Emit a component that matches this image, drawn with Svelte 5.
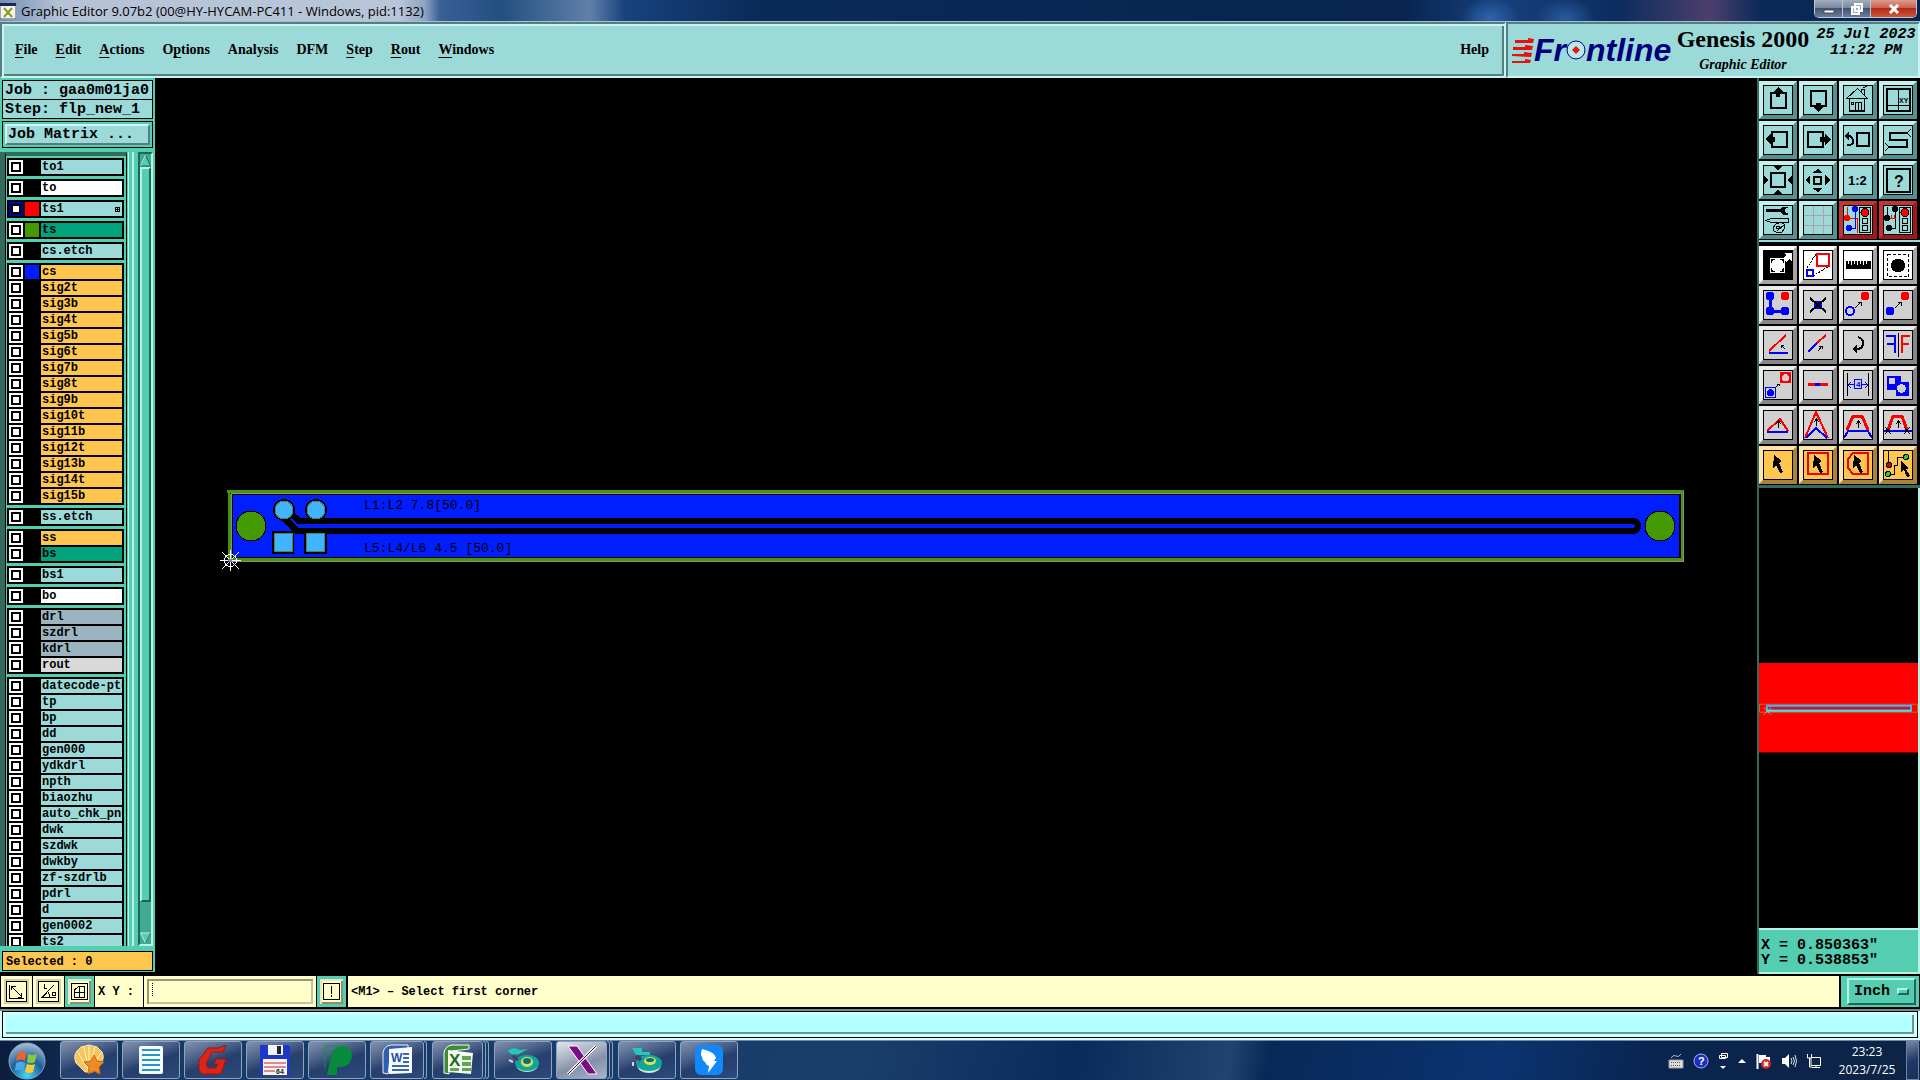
<script lang="ts">
  interface Layer {
    name: string;
    tone?: string;
    swatch?: string;
    active?: boolean;
  }

  interface Tool {
    label: string;
    icon: string;
    tone?: string;
  }

  // [text before the mnemonic, mnemonic, text after it]
  const menus = [
    ['', 'F', 'ile'],
    ['', 'E', 'dit'],
    ['', 'A', 'ctions'],
    ['O', 'p', 'tions'],
    ['Analysis', '', ''],
    ['DFM', '', ''],
    ['', 'S', 'tep'],
    ['', 'R', 'out'],
    ['', 'W', 'indows']
  ];

  const plain = (names: string, tone = ''): Layer[] => names.split(' ').map((name) => ({ name, tone }));

  const groups: Layer[][] = [
    [{ name: 'to1' }],
    [{ name: 'to', tone: 'silk' }],
    [{ name: 'ts1', swatch: '#ff0000', active: true }],
    [{ name: 'ts', tone: 'mask', swatch: '#449900' }],
    [{ name: 'cs.etch' }],
    [
      { name: 'cs', tone: 'signal', swatch: '#001eff' },
      ...plain('sig2t sig3b sig4t sig5b sig6t sig7b sig8t sig9b sig10t sig11b sig12t sig13b sig14t sig15b', 'signal')
    ],
    [{ name: 'ss.etch' }],
    [{ name: 'ss', tone: 'signal' }, { name: 'bs', tone: 'mask' }],
    [{ name: 'bs1' }],
    [{ name: 'bo', tone: 'silk' }],
    [...plain('drl szdrl kdrl', 'drill'), { name: 'rout', tone: 'rout' }],
    plain('datecode-ptd tp bp dd gen000 ydkdrl npth biaozhu auto_chk_pnl dwk szdwk dwkby zf-szdrlb pdrl d gen0002 ts2')
  ];

  const cursor = '<path d="M11 5l8 6-3 2 4 9-3 1-4-8-3 3z" fill="#000"/>';
  const smallArrow = '<path d="M12 18l6-6M14.500 12.500h3.500v3.500" stroke="#000" fill="none"/>';
  const upArrow = '<path d="M15.500 18v-6M13 14l2.500-3 2.500 3" stroke="#000" fill="none"/>';
  const lights =
    '<path d="M16.500 2.500h11v25h-11z" fill="#9cdada" stroke="#000"/><circle cx="22" cy="7.500" r="4" fill="#f00" stroke="#000"/><g fill="none" stroke="#000"><circle cx="22" cy="16" r="3"/><circle cx="22" cy="23" r="3"/></g>';

  const viewTools: Tool[] = [
    { label: 'Pan up', icon: '<path d="M8 8h15v15H8z" fill="none" stroke="#000" stroke-width="2"/><path d="M15 2l5 5h-3v5h-4V7h-3z"/>' },
    { label: 'Pan down', icon: '<path d="M8 6h15v15H8z" fill="none" stroke="#000" stroke-width="2"/><path d="M15 27l5-5h-2v-4h-5v4h-3z"/>' },
    { label: 'Home', icon: '<path d="M3.500 13.500L14.500 3.500l10 10zM6.500 14v12h15V14M12.500 26v-9h6v9M8.500 17.500h2v2h-2zM15.500 17v9M18.500 7V4.500h3V10M20 3l4-2" fill="none" stroke="#000"/><path d="M6 26h16" stroke="#000" stroke-width="2"/>' },
    { label: 'Zoom to XY', icon: '<path d="M4 4h23v22H4z" fill="none" stroke="#000" stroke-width="2"/><path d="M15.500 4v22M4 20.500h23" stroke="#000"/><text x="16" y="18" font-size="7" font-weight="bold">XY</text>' },
    { label: 'Pan left', icon: '<path d="M9 7h15v15H9z" fill="none" stroke="#000" stroke-width="2"/><path d="M2 14l6-5v3h4v5H8v3z"/>' },
    { label: 'Pan right', icon: '<path d="M5 7h15v15H5z" fill="none" stroke="#000" stroke-width="2"/><path d="M28 14l-6-5v3h-5v5h5v3z"/>' },
    { label: 'Previous view', icon: '<path d="M14 8h12v13H14z" fill="none" stroke="#000" stroke-width="2"/><path d="M4 20h3q4-1 3-5-1-4-5-4" fill="none" stroke="#000" stroke-width="2"/><path d="M1 11l5-4v8z"/>' },
    { label: 'Serpentine view', icon: '<path d="M24 8H7v7h17v7H6" fill="none" stroke="#000" stroke-width="2"/><path d="M28 4l-4 4 4 4M2 18l4 4-4 4" fill="none" stroke="#000"/>' },
    { label: 'Zoom out', icon: '<path d="M8 8h14v14H8z" fill="none" stroke="#000" stroke-width="2"/><path d="M10 1h10l-5 4zM10 29h10l-5-4zM1 10v10l4-5zM29 10v10l-4-5z"/>' },
    { label: 'Zoom in', icon: '<path d="M11 12h7v7h-7z" fill="none" stroke="#000" stroke-width="2"/><path d="M9 8h11l-5-4zM9 23h11l-5 4zM7 10v10l-5-5zM22 10v10l5-5z"/>' },
    { label: 'Scale one to two', icon: '<text x="5" y="20" font-size="13" font-weight="bold">1:2</text>' },
    { label: 'Query', icon: '<path d="M4 4h23v23H4z" fill="none" stroke="#000" stroke-width="2"/><text x="11" y="22" font-size="16">?</text>' },
    { label: 'Setup', icon: '<path d="M3 5h15" stroke="#000" stroke-width="3"/><path d="M25 2h-5l-3 3 3 4h5l-4-2V4z" stroke="#000"/><path d="M3 15.500l5-2h17v4H8zM13 19q7-3 9 1 0 4-3 7-5 1-8-1-2-3 2-7zM14 26l7-6M13 21h3v2h-3z" fill="none" stroke="#000"/>' },
    { label: 'Grid', icon: '<path d="M10.500 0v30M20.500 0v30M0 10.500h30M0 20.500h30" stroke="#a9a3ad"/>' },
    { label: 'Online checks', tone: 'alert', icon: '<path d="M4.500 2v11h10v15" fill="none" stroke="#f00"/><path d="M12.500 4v19H6" fill="none" stroke="#00f"/><circle cx="12" cy="4" r="3" fill="#00f"/><circle cx="6" cy="23" r="3" fill="#00f"/><circle cx="4" cy="13" r="3" fill="#f00"/>' + lights },
    { label: 'Short checks', tone: 'alert', icon: '<path d="M4.500 2v11M12.500 4v19H6" fill="none" stroke="#000"/><path d="M7 13.500h6M8.500 10v4M11.500 10v4" stroke="#f00"/><g><circle cx="12" cy="4" r="3"/><circle cx="6" cy="23" r="3"/><circle cx="4" cy="13" r="3"/></g>' + lights }
  ];

  const editTools: Tool[] = [
    { label: 'Select in window', tone: 'white', icon: '<path d="M1 1h28v28H1z"/><path d="M7 8h15v15H7zM20 8l3-3-2-2h8v8l-3-2-3 3" fill="#fff"/><path d="M8 9h13v13H8z"/><circle cx="14.500" cy="15.500" r="6.500" fill="#fff"/>' },
    { label: 'Scale feature', tone: 'white', icon: '<path d="M4 18l9-14M10 26l16-10" stroke="#000" stroke-dasharray="2 1"/><path d="M14 4h12v12H14z" fill="none" stroke="#f00" stroke-width="2"/><path d="M4 20h6v6H4z" fill="none" stroke="#00f" stroke-width="2"/>' },
    { label: 'Measure', tone: 'white', icon: '<path d="M3 11h25v8H3z"/><path d="M5.500 11v3M8.500 11v4M11.500 11v3M14.500 11v4M17.500 11v3M20.500 11v4M23.500 11v3" stroke="#fff"/>' },
    { label: 'Pad mode', tone: 'white', icon: '<path d="M4.500 4.500h21v22h-21z" fill="none" stroke="#000" stroke-dasharray="3 2"/><circle cx="15" cy="15.500" r="7"/>' },
    { label: 'Move chain', icon: '<path d="M7 6v15h15" fill="none" stroke="#00f" stroke-width="3"/><g fill="#00f"><circle cx="7" cy="6" r="4.500"/><circle cx="7" cy="21" r="4.500"/><circle cx="22" cy="21" r="4.500"/></g><circle cx="22" cy="6" r="4.500" fill="#f00"/>' },
    { label: 'Delete', icon: '<circle cx="15" cy="15" r="4" fill="#00f"/><path d="M7 8l16 14M23 8L7 22" stroke="#000" stroke-width="2"/>' },
    { label: 'Copy', icon: '<circle cx="7" cy="21" r="4" fill="none" stroke="#00f" stroke-width="2"/><circle cx="22" cy="6" r="4.500" fill="#f00"/>' + smallArrow },
    { label: 'Move', icon: '<circle cx="7" cy="21" r="4.500" fill="#00f"/><circle cx="22" cy="6" r="4.500" fill="#f00"/>' + smallArrow },
    { label: 'Rotate line', icon: '<path d="M6 21L23 5" stroke="#f00" stroke-width="2"/><path d="M6 23h19" stroke="#00f" stroke-width="2"/><path d="M22 19l-4-4m0 3v-3h3" fill="none" stroke="#000"/>' },
    { label: 'Stretch line', icon: '<path d="M5 22l9-9" stroke="#00f" stroke-width="2"/><path d="M14 13l9-8" stroke="#f00" stroke-width="2"/><path d="M15 21l4-5m-3 0h3v3" fill="none" stroke="#000"/>' },
    { label: 'Rotate', icon: '<path d="M15 7q6 2 5 7-1 6-8 5" fill="none" stroke="#000" stroke-width="2"/><path d="M9 19l5-4v8z"/>' },
    { label: 'Mirror', icon: '<path d="M3 6h9v17M4 14h8" fill="none" stroke="#00f" stroke-width="2"/><path d="M15.500 3v24" stroke="#000"/><path d="M27 6h-8v17M26 14h-7" fill="none" stroke="#f00" stroke-width="2"/>' },
    { label: 'Replace symbol', icon: '<path d="M17 2h11v11H17z" fill="#f00"/><circle cx="22.500" cy="7.500" r="3.500" fill="#d0d0d0"/><path d="M2.500 17.500h10v10h-10z" fill="none" stroke="#00f"/><circle cx="7.500" cy="22.500" r="3.500" fill="#00f"/><path d="M13 17l3-3m-2 0h2v2" fill="none" stroke="#000"/>' },
    { label: 'Break line', icon: '<path d="M5 14.500h20" stroke="#f00" stroke-width="3"/><path d="M12 14.500h5" stroke="#00f" stroke-width="3"/>' },
    { label: 'Spacing', icon: '<path d="M4.500 3v23M25.500 3v23" stroke="#000"/><path d="M11.500 9.500h7v9h-7zM5 14.500h6M19 14.500h6M8 12l-3 3 3 3M22 12l3 3-3 3" fill="none" stroke="#00f"/><text x="13" y="17" font-size="8" fill="#00f">4</text>' },
    { label: 'Boolean', icon: '<path d="M4 6h14v6h8v14H13v-6H4z" fill="#00f"/><circle cx="9" cy="11" r="3.500" fill="#d0d0d0"/><circle cx="18.500" cy="18.500" r="4.500" fill="#d0d0d0"/>' },
    { label: 'Move vertex', icon: '<path d="M4 21L17 9l8 12" fill="none" stroke="#f00" stroke-width="2"/><path d="M4 22h21" stroke="#00f" stroke-width="2"/>' + upArrow },
    { label: 'Peak', icon: '<path d="M2 28L13 2l12 26" fill="none" stroke="#f00" stroke-width="2"/><path d="M3 28l10-10 11 10" fill="none" stroke="#00f" stroke-width="2"/><path d="M13.500 16V9M11 12l2.500-3 2.500 3" fill="none" stroke="#000"/>' },
    { label: 'Plateau', icon: '<path d="M4 20l6-14h9l6 14" fill="none" stroke="#f00" stroke-width="3"/><path d="M1 28l4-7h20l4 7" fill="none" stroke="#00f" stroke-width="2"/>' + upArrow },
    { label: 'Plateau with breaks', icon: '<path d="M5 20l5-14h9l5 14" fill="none" stroke="#f00" stroke-width="3"/><path d="M1 21h28" stroke="#00f" stroke-width="2"/><path d="M2 17l6 7M8 17l-6 7M21 17l6 7M27 17l-6 7" stroke="#000"/>' + upArrow },
    { label: 'Select', tone: 'pick', icon: cursor },
    { label: 'Select in rectangle', tone: 'pick', icon: '<path d="M5 3h20v21H5z" fill="none" stroke="#f00000" stroke-width="2"/>' + cursor },
    { label: 'Select in polygon', tone: 'pick', icon: '<path d="M10 3h15v21H10l-5-6V9z" fill="none" stroke="#f00000" stroke-width="2"/>' + cursor },
    { label: 'Select net', tone: 'pick', icon: '<path d="M5.500 1v14M5 24.500h6.500v-9h3v-8h9" fill="none" stroke="#000"/><circle cx="6" cy="15" r="2.500" fill="#b01010" stroke="#000"/><g fill="#2c3" stroke="#000"><circle cx="5" cy="24" r="2.500"/><circle cx="23" cy="7" r="2.500"/></g><path d="M18 11l8 7-3 1 4 7-3 1-3-7-3 2z"/>' }
  ];

  const tasks = [
    { label: 'Shell', icon: '<path d="M3 19Q0 12 4 7l4-4 8-2 8 2 5 5q3 6-1 11l-8 9h-8z" fill="#f6c55b" stroke="#fbe7b0"/><path d="M16 28L5 8M16 28L11 3M16 28V2M16 28l6-25M16 28L28 9" stroke="#fff2c8"/><path d="M21 11l3 6 7 1-5 5 1 7-6-3-6 3 1-7-5-5 7-1z" fill="#f08a24" stroke="#c96512"/>' },
    { label: 'Notes', icon: '<rect x="4" y="2" width="24" height="28" rx="2" fill="#f4fbff"/><path d="M7 6h18M7 11h18M7 16h18M7 21h18M7 26h18" stroke="#2a93c5" stroke-width="2"/>' },
    { label: 'Genesis', icon: '<path d="M29 1l-3 7H15l-6 12 2 4h8l2-4h-4l2-5h10l-5 15H5l-3-4V16L11 4h11z" fill="#d9251c" stroke="#a3150e"/>' },
    { label: 'Save', icon: '<path d="M1 1h28l2 2v28H1z" fill="#1d38c9"/><path d="M9 1h15v10H9zM4 15h24v16H4z" fill="#f4f4f4"/><path d="M18 2h4v8h-4z" fill="#223"/><path d="M5 19h22M5 23h22M5 27h11" stroke="#c22"/><text x="17" y="30" font-size="7" fill="#222">64</text>' },
    { label: 'Project', icon: '<path d="M6 31l5-23q4-6 11-6 9 2 9 10-1 10-10 11h-5v8z" fill="#078a3c"/><path d="M4 25V2h22" fill="none" stroke="#0a9644"/>' },
    { label: 'Word', stack: 1, icon: '<path d="M2 29V9q1-7 8-8h17v4L10 7 7 30z" fill="#2c60af" stroke="#eef"/><path d="M8 5l23-2v26L8 30z" fill="#f7faff"/><path d="M22 10h6M22 14h6M22 18h6M11 22h17M11 26h17" stroke="#3b66b0" stroke-width="2"/><text x="10" y="18" font-size="12" font-weight="bold" fill="#2254a0">W</text>' },
    { label: 'Excel', stack: 2, icon: '<path d="M2 29V9q1-7 8-8h17v4L10 7 7 30z" fill="#418a3c" stroke="#efe"/><path d="M6 6l25 3-2 21-23-2z" fill="#f4fbf0"/><path d="M20 12h9v4h-9zM20 18h9v4h-9zM20 24h9v3h-9zM8 24h9v3H8z" fill="#62a653"/><text x="7" y="22" font-size="17" font-weight="bold" fill="#1f6a24">X</text>' },
    { label: 'Editor', icon: '<ellipse cx="20" cy="21" rx="11" ry="7" fill="#d8e8dc"/><ellipse cx="20" cy="19" rx="12" ry="8" fill="#10a698"/><ellipse cx="20" cy="18" rx="6" ry="5" fill="#dde05a"/><ellipse cx="20" cy="17" rx="4" ry="3" fill="#0b6e74"/><path d="M1 7q5-5 12-1l8-1-9 5q-8 2-11-3z" fill="#25c9ba"/><path d="M6 12l5 4" stroke="#4a3c6c" stroke-width="3"/><path d="M2 16l4 2" stroke="#dce" stroke-width="2"/>' },
    { label: 'X server', stack: 1, lit: true, icon: '<path d="M2 2h9l20 28h-9z" fill="#7b0b86" stroke="#fff"/><path d="M30 2L2 30" stroke="#fff" stroke-width="3"/><path d="M30 2L2 30" stroke="#3a1040"/>' },
    { label: 'Viewer', icon: '<ellipse cx="18" cy="21" rx="12" ry="8" fill="#d8e8dc"/><ellipse cx="18" cy="19" rx="13" ry="8" fill="#10a698"/><ellipse cx="19" cy="17" rx="6" ry="4" fill="#dde05a"/><ellipse cx="19" cy="16" rx="4" ry="2" fill="#0b6e74"/><path d="M1 4h10v4h8v3H5z" fill="#25c9ba"/><path d="M5 12l5 4" stroke="#4a3c6c" stroke-width="4"/><path d="M2 18v4" stroke="#dce" stroke-width="2"/>' },
    { label: 'DingTalk', icon: '<rect x="2" y="1" width="28" height="30" rx="6" fill="#1189fb"/><path d="M9 5q13 3 14 9l-2 3h3l-9 12 1-7q-3-1-4-4-3-2-3-5-2-3 0-8z" fill="#fff"/>' }
  ];
</script>

{#snippet toolGrid(tools: Tool[])}
  <div class="tool-grid">
    {#each tools as tool}
      <button class="tool {tool.tone ?? ''}" aria-label={tool.label}>
        <svg width="30" height="30" viewBox="0 0 30 30">
          {@html tool.icon}
          <rect class="tool-frame" x="0.500" y="0.500" width="29" height="29" />
        </svg>
      </button>
    {/each}
  </div>
{/snippet}

<div class="desktop">
  <header class="titlebar">
    <svg width="16" height="16" viewBox="0 0 16 16" aria-hidden="true">
      <path d="M0 0h16v16H0z" fill="#f4f4ee" stroke="#556" />
      <path d="M0 0h16v3H0z" fill="#23235c" />
      <path d="M4 5l8 9M12 5l-8 9" stroke="#8c9a20" stroke-width="2" />
    </svg>
    <span class="title">Graphic Editor 9.07b2 (00@HY-HYCAM-PC411 - Windows, pid:1132)</span>
    <div class="window-buttons">
      <button aria-label="Minimize"><svg width="12" height="10" viewBox="0 0 12 10"><path d="M1 6h10v3H1z" fill="#fff" stroke="#445" /></svg></button>
      <button aria-label="Restore"><svg width="14" height="12" viewBox="0 0 14 12"><path d="M5 1h7v7H5zM2 4h7v7H2z" fill="#9ab" stroke="#fff" stroke-width="2" /></svg></button>
      <button class="close" aria-label="Close"><svg width="12" height="10" viewBox="0 0 12 10"><path d="M2 1l8 8M10 1L2 9" stroke="#fff" stroke-width="3" /></svg></button>
    </div>
  </header>

  <div class="topbar">
    <nav class="menubar">
      {#each menus as [before, key, after]}
        <button>{before}{#if key}<u>{key}</u>{/if}{after}</button>
      {/each}
      <button class="help">Help</button>
    </nav>
    <div class="brand">
      <div class="logo">
        <svg width="22" height="26" viewBox="0 0 22 26" aria-hidden="true">
          <g fill="#e81010">
            <path d="M3 3h13V1l6 1-1 4H3zM1 10h12V8l8 1-1 4H1zM0 17h12v-2l8 1-1 4-19-1zM0 24h13v-2l6 1-1 3H0z" />
          </g>
        </svg>
        <span>Fr</span>
        <svg width="20" height="20" viewBox="0 0 20 20" aria-label="o">
          <circle cx="10" cy="10" r="9" fill="#b8e8ec" stroke="#00007c" />
          <path d="M10 6l4 4-4 4-4-4z" fill="#f01010" />
        </svg>
        <span>ntline</span>
      </div>
      <div class="product">
        <strong>Genesis 2000</strong>
        <em>Graphic Editor</em>
      </div>
      <time>25 Jul 2023<br />11:22 PM</time>
    </div>
  </div>

  <main>
    <aside class="layers-panel">
      <div class="job-info">
        <p>Job : gaa0m01ja0</p>
        <p>Step: flp_new_1</p>
      </div>
      <div class="matrix"><button>Job Matrix ...</button></div>
      <div class="layers">
        <div class="layer-list">
          {#each groups as group}
            <div class="group">
              {#each group as layer}
                <label class="layer">
                  <input type="checkbox" class:active={layer.active} />
                  <span class="swatch" style:background={layer.swatch ?? '#000'}></span>
                  <span class="name {layer.tone ?? ''}">
                    {layer.name}
                    {#if layer.active}
                      <svg class="mark" width="5" height="5" viewBox="0 0 5 5"><path d="M0 0h5v5H0z" /><path d="M1 1h1v1H1zM3 1h1v1H3zM1 3h1v1H1zM3 3h1v1H3z" fill="#9cdada" /></svg>
                    {/if}
                  </span>
                </label>
              {/each}
            </div>
          {/each}
        </div>
        <div class="rails"></div>
        <div class="scrollbar">
          <svg width="11" height="13" viewBox="0 0 11 13"><path d="M5.500 1l5 11h-10z" fill="#54cdb0" stroke="#1f6658" /><path d="M5.500 1L.5 12" stroke="#b4f4e4" /></svg>
          <div class="thumb"></div>
          <svg width="11" height="12" viewBox="0 0 11 12"><path d="M5.500 11l5-10H.5z" fill="#54cdb0" stroke="#b4f4e4" /><path d="M5.500 11l5-10" stroke="#1f6658" /></svg>
        </div>
      </div>
      <p class="selected">Selected : 0</p>
    </aside>

    <section class="canvas">
      <svg viewBox="155 78 1602 898" aria-label="Board">
        <path d="M229 490h1454v71H229z" />
        <path d="M229 491.500h1453.500v68H229.500z" fill="none" stroke="#449900" stroke-width="3" />
        <path d="M231.500 493.500H1682M231.500 493v67M230 561.500h1453.500V491" fill="none" stroke="#8c8c8c" />
        <path d="M233 495h1446v62H233z" fill="#001eff" />
        <g fill="#449900" stroke="#000">
          <circle cx="251" cy="526" r="15" />
          <circle cx="1660" cy="526" r="15" />
        </g>
        <path d="M284 507l15 14h1335q4 1 4 5t-4 5H297l-14-14" fill="none" stroke="#000" stroke-width="6" />
        <g fill="#42b4ff">
          <circle cx="284" cy="510" r="10" stroke="#000" stroke-width="2" />
          <circle cx="316" cy="510" r="10" stroke="#000" stroke-width="2" />
          <path d="M273 532h20v21h-20zM305 532h21v21h-21z" stroke="#000" stroke-width="2" />
          <path d="M274.500 533.500h18v18h-18zM306.500 533.500h18v18h-18z" stroke="#3d8a5a" />
        </g>
        <g fill="none" stroke="#3d8a5a">
          <circle cx="284" cy="510" r="9" />
          <circle cx="316" cy="510" r="9" />
        </g>
        <text x="364" y="509">L1:L2 7.8[50.0]</text>
        <text x="364" y="552">L5:L4/L6 4.5 [50.0]</text>
        <g fill="none" stroke="#fff">
          <circle cx="230.500" cy="560.500" r="6" />
          <path d="M220 560.500h21M230.500 550v21M222 552l17 17M239 552l-17 17" />
        </g>
        <circle cx="230.500" cy="560.500" r="2" fill="#a070e0" />
      </svg>
    </section>

    <aside class="tools-panel">
      {@render toolGrid(viewTools)}
      <div class="edit-tools">{@render toolGrid(editTools)}</div>
      <div class="overview">
        <svg viewBox="0 0 160 90" aria-label="Overview">
          <path d="M0 0h160v90H0z" fill="#f00" />
          <path d="M.5 41.500h159v8H.5z" fill="none" stroke="#b5751c" />
          <path d="M8 43h145v5H8z" fill="#d01030" stroke="#42b4ff" stroke-width="2" />
          <path d="M8 48h145" stroke="#44e0d8" stroke-width="2" />
          <path d="M5 45l7 7M12 45l-7 7" stroke="#9cdada" stroke-dasharray="2 1" />
        </svg>
      </div>
      <div class="position">X = 0.850363"<br />Y = 0.538853"</div>
    </aside>
  </main>

  <footer class="command">
    <button class="mode" aria-label="Vector"><svg width="21" height="21" viewBox="0 0 21 21"><path d="M.5 .5h20v20H.5zM3.500 4v13.500h14M5 5l11 11M5.500 9V5.500h4M15.500 12v4h-4" fill="none" stroke="#000" /></svg></button>
    <button class="mode" aria-label="Angle"><svg width="21" height="21" viewBox="0 0 21 21"><path d="M.5 .5h20v20H.5zM16 4L4 16.500h14M6.500 3v4.500H9M10 11q2 2 1 5M14.500 11.500h3v3h-3z" fill="none" stroke="#000" /></svg></button>
    <button class="mode teal" aria-label="Snap"><svg width="17" height="17" viewBox="0 0 17 17"><path d="M.5 .5h16v16H.5zM3.500 14.500V7l4-3.500h6v11zM8.500 3v12M3 9.500h11" fill="none" stroke="#000" /></svg></button>
    <label for="xy">X Y :</label>
    <input id="xy" type="text" />
    <button class="mode teal" aria-label="Alert"><svg width="17" height="17" viewBox="0 0 17 17"><path d="M.5 .5h16v16H.5z" fill="none" stroke="#000" /><path d="M8 3h1v8H8zM8 12h1v2H8z" /></svg></button>
    <output>&lt;M1&gt; – Select first corner</output>
    <div class="units">
      <select aria-label="Units"><option>Inch</option><option>MM</option></select>
      <span class="knob"></span>
    </div>
  </footer>
  <div class="status"><div></div></div>

  <div class="taskbar">
    <button class="orb" aria-label="Start">
      <svg width="38" height="38" viewBox="0 0 38 38">
        <defs>
          <radialGradient id="orb" cx="0.500" cy="0.900" r="0.900">
            <stop offset="0" stop-color="#44d8f8" /><stop offset="0.500" stop-color="#1d5f9c" /><stop offset="1" stop-color="#a9bfd0" />
          </radialGradient>
        </defs>
        <circle cx="19" cy="19" r="18" fill="url(#orb)" stroke="#7fa5c4" />
        <path d="M10 11q4-3 8 0l-1 8q-4-3-9 0z" fill="#f0602a" />
        <path d="M20 12q4 2 9 0l-2 8q-4 2-8 0z" fill="#8cc63c" />
        <path d="M8 21q4-3 9 0l-2 8q-4-3-8 0z" fill="#4aa8e8" />
        <path d="M19 22q4 2 8 0l-2 8q-4 2-8 0z" fill="#fcc935" />
      </svg>
    </button>
    {#each tasks as task}
      <div class="task-slot">
        <button class="task" class:stacked={task.stack} class:double={task.stack === 2} class:lit={task.lit} aria-label={task.label}>
          <svg width="32" height="32" viewBox="0 0 32 32">{@html task.icon}</svg>
        </button>
        {#if task.stack}<i></i>{/if}
        {#if task.stack === 2 || task.lit}<i></i>{/if}
      </div>
    {/each}
    <div class="tray">
      <svg width="16" height="16" viewBox="0 0 16 16"><path d="M1 7h14v8H1z" fill="#ddd" stroke="#999" /><path d="M3 9.500h10M3 12.500h10" stroke="#555" stroke-dasharray="1 1" /><path d="M3 5q3-4 5-2t5-2" fill="none" stroke="#bbb" /></svg>
      <svg width="16" height="16" viewBox="0 0 16 16"><circle cx="8" cy="8" r="7" fill="#1a2fc0" stroke="#a8b8f0" /><text x="5" y="12" font-size="11" font-weight="bold" fill="#fff">?</text></svg>
      <svg width="10" height="20" viewBox="0 0 10 20"><path d="M3.500 2.500h6v4h-6zM1.500 4.500h6v3h-6z" fill="#123" stroke="#fff" /><path d="M2 15h6l-3 3z" fill="#fff" /></svg>
      <svg width="10" height="8" viewBox="0 0 10 8"><path d="M1 6h8L5 2z" fill="#fff" /></svg>
      <svg width="16" height="16" viewBox="0 0 16 16"><path d="M1.500 1v15" stroke="#fff" stroke-width="2" /><path d="M3 2h7v2h4v6H3z" fill="#fff" /><circle cx="10" cy="11" r="5" fill="#d8281c" /><path d="M8 9l4 4M12 9l-4 4" stroke="#fff" stroke-width="2" /></svg>
      <svg width="16" height="16" viewBox="0 0 16 16"><path d="M1 5h3l4-4v14l-4-4H1z" fill="#fff" /><path d="M10 5q2 3 0 6M12 4q3 4 0 8M14 2q3 6 0 12" fill="none" stroke="#dde" /></svg>
      <svg width="16" height="16" viewBox="0 0 16 16"><path d="M5 4.500h9.500v8H5zM6 14.500h8M10 12v3" fill="none" stroke="#fff" /><path d="M1.500 1v4h4V1M3.500 5v9H6" fill="none" stroke="#fff" /></svg>
      <div class="clock">23:23<br />2023/7/25</div>
      <button class="show-desktop" aria-label="Show desktop"></button>
    </div>
  </div>
</div>

<style>
  :global(body) {
    margin: 0;
    background: #000;
  }

  .desktop {
    --teal: #54cdb0;
    --cyan: #9cdada;
    --light: #c8f4f4;
    --shade: #53807f;
    --cream: #ffffcc;
    --orange: #ffc64f;
    --mono: 'Liberation Mono', monospace;
    display: flex;
    flex-direction: column;
    height: 100vh;
    overflow: hidden;
    color: #000;
    font-family: var(--mono);
    font-size: 12px;
    font-weight: bold;
  }

  .desktop *,
  .desktop :global(*) {
    box-sizing: border-box;
  }

  button,
  input,
  select {
    margin: 0;
    padding: 0;
    border: 0;
    border-radius: 0;
    background: none;
    color: inherit;
    font: inherit;
  }

  p {
    margin: 0;
  }

  svg {
    display: block;
    flex-shrink: 0;
  }

  svg :global(text) {
    font-family: 'Liberation Sans', sans-serif;
  }

  .titlebar {
    display: flex;
    align-items: center;
    gap: 5px;
    flex: none;
    height: 22px;
    border-bottom: 1px solid #a8bdd6;
    background:
      radial-gradient(ellipse 30px 20px at 1490px 18px, #2f64ac, transparent),
      radial-gradient(ellipse 30px 20px at 1565px 18px, #2a5a9e, transparent),
      linear-gradient(90deg, #7690b4 0, #b6c2d6 60px, #b9c5d9 400px, #8fa3c0 425px, #3a6097 440px, #224f7f 500px, #6080aa 590px, #17437c 625px, #0a2a58 760px, #08244f 1400px, #16407c 1500px, #0c2c5e 1620px, #4c3f6c 1710px, #0b2a5a 1760px, #08254f);
  }

  .title {
    font-family: 'Open Sans', sans-serif;
    font-size: 13px;
    font-weight: normal;
    line-height: 20px;
  }

  .window-buttons {
    display: flex;
    align-self: flex-start;
    width: 103px;
    height: 18px;
    margin-left: auto;
    margin-right: 3px;
    overflow: hidden;
    border: 1px solid #b9c6d6;
    border-top: 0;
    border-radius: 0 0 5px 5px;

    & button {
      display: grid;
      place-items: center;
      width: 28px;
      border-right: 1px solid #b9c6d6;
      background: linear-gradient(#a4afbd, #7888a0 45%, #42546e 50%, #6b7e99);
    }

    & .close {
      flex: 1;
      border-right: 0;
      background: linear-gradient(#dc9c90, #cc6252 45%, #b42a16 50%, #d2573c);
    }
  }

  .topbar {
    display: flex;
    flex: none;
    height: 56px;
    background: var(--light);
  }

  .menubar,
  .brand {
    display: flex;
    border: 2px solid var(--shade);
    border-right-color: var(--light);
    border-bottom-color: var(--light);
    background: var(--cyan);
  }

  .menubar {
    align-items: center;
    flex: 1;
    gap: 18px;
    padding: 0 15px 0 13px;
    box-shadow: inset 2px 2px var(--light), inset -2px -2px var(--shade);
    font-family: 'Liberation Serif', serif;
    font-size: 14px;

    & u {
      text-underline-offset: 3px;
      text-decoration-thickness: 1px;
    }
  }

  .help {
    margin-left: auto;
  }

  .brand {
    width: 414px;
    padding: 0 0 0 4px;
  }

  .logo {
    display: flex;
    align-items: center;
    width: 164px;
    color: #00007c;
    font: italic bold 32px/36px 'Liberation Sans', sans-serif;
  }

  .product {
    display: flex;
    flex-direction: column;
    align-items: center;
    width: 134px;
    padding-top: 1px;
    font-family: 'Liberation Serif', serif;
    white-space: nowrap;

    & strong {
      font-size: 24px;
      line-height: 28px;
    }

    & em {
      font-size: 14px;
      line-height: 24px;
    }
  }

  time {
    flex: 1;
    padding: 3px 0 0 4px;
    font-size: 15px;
    font-style: italic;
    line-height: 16px;
    text-align: center;
    white-space: nowrap;
  }

  main {
    display: flex;
    flex: 1;
    min-height: 0;
    background: #000;
  }

  .layers-panel {
    display: flex;
    flex-direction: column;
    width: 155px;
    margin-bottom: 4px;
    padding: 2px 2px 1px;
    background: var(--teal);
  }

  .job-info {
    display: grid;
    gap: 1px;
    padding: 1px;
    background: #000;

    & p {
      padding: 2px 0 0 2px;
      background: var(--cyan);
      font-size: 15px;
      line-height: 16px;
      white-space: nowrap;
    }
  }

  .matrix {
    margin: 2px 0 4px;
    padding: 2px;
    border: 1px solid #000;

    & button {
      width: 100%;
      height: 21px;
      border: 2px solid;
      border-color: #d0f8f8 var(--shade) var(--shade) #d0f8f8;
      padding: 1px 0 0 1px;
      background: var(--cyan);
      font-size: 15px;
      line-height: 16px;
      text-align: left;
    }
  }

  .layers {
    display: flex;
    flex: 1;
    min-height: 0;
    margin-left: -2px;
    border-left: 5px solid #34695e;
  }

  .layer-list {
    display: flex;
    flex-direction: column;
    gap: 3px;
    width: 122px;
    padding: 2px 2px 0 1px;
    border-top: 4px solid #34695e;
    border-left: 1px solid #000;
    border-right: 1px solid #000;
    overflow: hidden;
  }

  .group {
    display: grid;
    flex: none;
    gap: 2px;
    padding: 2px;
    background: #000;
  }

  .layer {
    display: grid;
    grid-template-columns: 14px 14px 1fr;
    gap: 2px;
    height: 14px;
    line-height: 14px;
  }

  .layer input {
    width: 14px;
    height: 14px;
    border: 2px solid #fff;
    outline: 2px solid #000;
    outline-offset: -4px;
    background: #fff;
    appearance: none;
  }

  .layer input.active {
    border-color: #0000a0;
  }

  .name {
    position: relative;
    min-width: 0;
    overflow: hidden;
    padding-left: 1px;
    background: var(--cyan);
    white-space: nowrap;

    &.silk {
      background: #fff;
    }

    &.mask {
      background: #00a37c;
    }

    &.signal {
      background: var(--orange);
    }

    &.drill {
      background: #9cb4bf;
    }

    &.rout {
      background: #d9d9d9;
    }
  }

  .mark {
    position: absolute;
    top: 5px;
    right: 2px;
  }

  .rails {
    width: 11px;
    background: linear-gradient(90deg, var(--teal) 1px, #b4f4e4 1px 2px, var(--teal) 2px 5px, #b4f4e4 5px 7px, var(--teal) 7px);
  }

  .scrollbar {
    display: flex;
    flex-direction: column;
    align-items: center;
    width: 15px;
    border: 2px solid;
    border-color: #1f6658 #b4f4e4 #b4f4e4 #1f6658;
    background: #40ab92;
  }

  .thumb {
    flex: 1;
    width: 11px;
    margin-bottom: 30px;
    border: 2px solid;
    border-color: #b4f4e4 #1f6658 #1f6658 #b4f4e4;
    background: var(--teal);
  }

  .selected {
    margin-top: 5px;
    padding: 2px 0 0 3px;
    border: 1px solid #000;
    background: var(--orange);
    line-height: 16px;
  }

  .canvas {
    flex: 1;
    min-width: 0;

    & svg {
      width: 100%;
      height: 100%;
      shape-rendering: crispEdges;
    }

    & text {
      font-family: var(--mono);
      font-size: 13px;
      font-weight: normal;
    }
  }

  .tools-panel {
    display: flex;
    flex-direction: column;
    width: 163px;
    margin-bottom: 2px;
    border-left: 2px solid #34695e;
    padding-top: 3px;
  }

  .tool-grid {
    display: grid;
    grid-template-columns: repeat(4, 38px);
    gap: 2px;
  }

  .tool {
    --face: var(--cyan);
    display: grid;
    place-items: center;
    width: 38px;
    height: 38px;
    border: 4px solid;
    border-color: #c4f0ee #53908f #53908f #c4f0ee;
    background: var(--face);

    & svg {
      shape-rendering: crispEdges;
    }
  }

  .tool-frame {
    fill: none;
    stroke: #000;
  }

  .edit-tools {
    margin-top: 1px;
    padding: 4px 0 1px;
    border-top: 2px solid #9cdada;
    border-bottom: 3px solid #34695e;

    & .tool {
      --face: #d0d0d0;
      border-color: #ececec #868686 #868686 #ececec;
    }

    & .white {
      --face: #fff;
      border-color: #fff #a9a3a3 #a9a3a3 #fff;
    }

    & .pick {
      --face: var(--orange);
      border-color: #ffe5ac #a8843a #a8843a #ffe5ac;
    }
  }

  .tool.alert {
    border-color: #c43434 #a01818 #a01818 #c43434;
  }

  .overview {
    display: flex;
    align-items: center;
    flex: 1;
    min-height: 0;
    border-right: 2px solid #b4f4e4;

    & svg {
      width: 100%;
    }
  }

  .position {
    height: 46px;
    padding: 8px 0 0 2px;
    border-top: 2px solid #b4f4e4;
    border-right: 2px solid #b4f4e4;
    border-bottom: 2px solid #b4f4e4;
    background: var(--teal);
    font-size: 15px;
    line-height: 15px;
  }

  .command {
    display: flex;
    flex: none;
    gap: 1px;
    height: 33px;
    padding: 0 1px;
    border-bottom: 2px solid #000;
    background: #000;

    & label {
      width: 48px;
      padding-left: 3px;
      background: var(--cream);
      line-height: 32px;
    }

    & input {
      width: 172px;
      border: 3px solid var(--cream);
      padding-left: 4px;
      background: repeating-linear-gradient(#000 0 1px, var(--cream) 1px 2px) 5px 4px / 1px 14px no-repeat var(--cream);
      box-shadow: inset 2px 2px #97977a, inset -2px -2px #c5c5a0;
    }

    & output {
      flex: 1;
      margin: 0 1px;
      padding-left: 3px;
      background: var(--cream);
      line-height: 32px;
    }
  }

  .mode {
    display: grid;
    place-items: center;
    width: 31px;
    border: 3px solid var(--cream);
    background: var(--cream);
    box-shadow: inset 0 0 0 2px #d2d2ae;

    & svg {
      shape-rendering: crispEdges;
    }
  }

  .mode.teal {
    width: 29px;
    border-color: var(--teal);
    box-shadow: inset 2px 2px #e8e8c0, inset -2px -2px #8f8f70;
  }

  .units {
    display: flex;
    align-items: center;
    width: 78px;
    padding: 2px 3px 2px 6px;
    background: var(--teal);

    & select {
      width: 69px;
      height: 27px;
      border: 2px solid;
      border-color: #b4f4e4 #1f6658 #1f6658 #b4f4e4;
      padding-left: 5px;
      font-size: 15px;
      appearance: none;
    }
  }

  .knob {
    width: 12px;
    height: 7px;
    margin-left: -19px;
    border: 2px solid;
    border-color: #b4f4e4 #1f6658 #1f6658 #b4f4e4;
    pointer-events: none;
  }

  .status {
    flex: none;
    height: 31px;
    padding: 0 2px;
    border-top: 2px solid #6f8e8d;
    background: #d4ffff;

    & div {
      height: 27px;
      border: 1px solid #000;
      background: #b4ffff;
      box-shadow: inset 3px 3px #d4ffff, inset -3px -3px #d4ffff, inset -5px -5px #5c9a9a;
    }
  }

  .taskbar {
    display: flex;
    flex: none;
    height: 40px;
    border-top: 1px solid #6c8aae;
    background: linear-gradient(100deg, #0b1d3c, #163a66 9%, #1a3e6c 45%, #0a2a5c 56%, #22436f 64%, #082858 66%, #0b3470 78%, #0a2450 86%, #0d2444);
  }

  .orb {
    width: 60px;
    padding-left: 8px;
  }

  .task-slot {
    display: flex;
    width: 62px;
    padding: 0 4px 1px 0;

    & i {
      width: 3px;
      border: 1px solid #8fa3bf;
      border-left: 0;
      border-radius: 0 3px 3px 0;
    }
  }

  .task {
    display: grid;
    place-items: center;
    width: 58px;
    border: 1px solid #90a2bd;
    border-radius: 3px;
    background: linear-gradient(160deg, #8393ae, #4a6088 35%, #263f6c 55%, #2b4a7c);

    &.stacked {
      width: 54px;
    }

    &.double {
      width: 51px;
    }

    &.lit {
      width: 51px;
      background: linear-gradient(160deg, #e2e6ec, #a3adbf 40%, #8490a8 60%, #a8b4c8);
    }
  }

  .tray {
    display: flex;
    align-items: center;
    gap: 9px;
    margin-left: auto;
    padding-right: 1px;
  }

  .clock {
    width: 60px;
    margin-left: 6px;
    color: #fff;
    font: 12px/18px 'Open Sans', sans-serif;
    text-align: center;
  }

  .show-desktop {
    align-self: stretch;
    width: 13px;
    border: 1px solid #6f84a4;
    background: linear-gradient(160deg, #7486a4, #1f3a64 50%, #18305a);
  }
</style>
